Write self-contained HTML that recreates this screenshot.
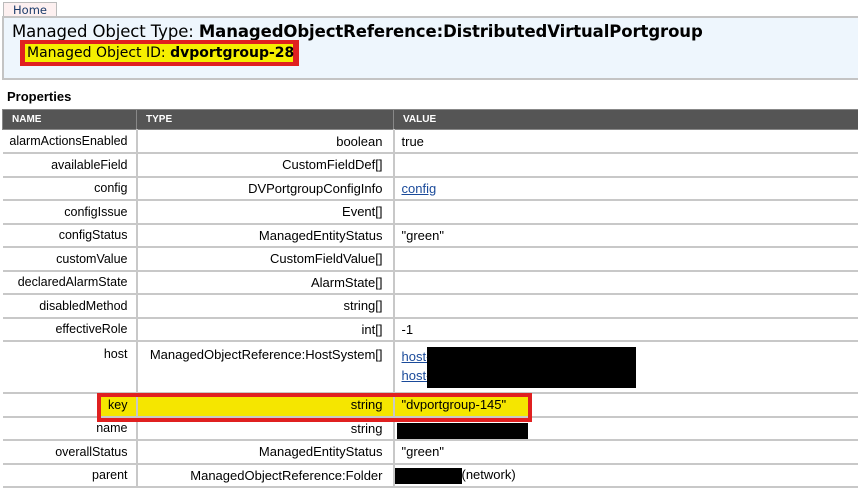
<!DOCTYPE html>
<html><head><meta charset="utf-8"><style>
*{margin:0;padding:0;box-sizing:border-box}
body{width:858px;height:488px;overflow:hidden;background:#fff;position:relative;font-family:"Liberation Sans",sans-serif;font-size:13px;color:#000}
.a{position:absolute}
#tab{left:3px;top:2px;width:54px;height:15px;border:1px solid #bbb;border-bottom:none;background:#fdf0f0;color:#1a3a6a;font-family:"DejaVu Sans",sans-serif;font-size:11.5px;text-align:center;line-height:14px}
#hdr{left:2px;top:16px;width:870px;height:64px;background:#eef6fd;border:2px solid #c4c4c4;border-right:none}
#title{left:12px;top:22px;font-family:"DejaVu Sans",sans-serif;font-size:16.5px;white-space:nowrap;letter-spacing:-0.1px}
#redbox{left:20px;top:40px;width:279px;height:26px;background:#e02020}
#idtxt{left:25px;top:44px;width:268px;height:18px;background:#f5ef00;font-family:"DejaVu Sans",sans-serif;font-size:14px;line-height:18px;padding-left:2px;white-space:nowrap}
#props{left:7px;top:89px;font-weight:bold;font-size:13px}
table{position:absolute;left:2px;top:109px;border-collapse:collapse;width:880px;table-layout:fixed}
th{background:#555;color:#fff;font-size:10px;text-align:left;height:20px;padding-left:9px;border:1px solid #888;font-weight:bold}
td{height:23.5px;border:1px solid #c8c8c8;border-width:0 2px 2px 0;padding:0 10px;white-space:nowrap;overflow:hidden}
td.n{text-align:right;padding-right:8px;padding-left:0;font-size:12.5px}
td.t{text-align:right}
td.v{text-align:left;padding-left:7px}
a{color:#1a4a9a;text-decoration:underline}
.blk{background:#000}
</style></head><body>
<div id="tab" class="a">Home</div>
<div id="hdr" class="a"></div>
<div id="title" class="a">Managed Object Type: <b>ManagedObjectReference:DistributedVirtualPortgroup</b></div>
<div id="redbox" class="a"></div>
<div id="idtxt" class="a">Managed Object ID: <b>dvportgroup-28</b></div>
<div id="props" class="a">Properties</div>
<div class="a" style="left:101px;top:397px;width:427px;height:21px;background:#f5e600"></div>
<table>
<colgroup><col style="width:134px"><col style="width:257px"><col></colgroup>
<tr><th>NAME</th><th>TYPE</th><th>VALUE</th></tr>
<tr><td class="n">alarmActionsEnabled</td><td class="t">boolean</td><td class="v">true</td></tr>
<tr><td class="n">availableField</td><td class="t">CustomFieldDef[]</td><td class="v"></td></tr>
<tr><td class="n">config</td><td class="t">DVPortgroupConfigInfo</td><td class="v"><a>config</a></td></tr>
<tr><td class="n">configIssue</td><td class="t">Event[]</td><td class="v"></td></tr>
<tr><td class="n">configStatus</td><td class="t">ManagedEntityStatus</td><td class="v">"green"</td></tr>
<tr><td class="n">customValue</td><td class="t">CustomFieldValue[]</td><td class="v"></td></tr>
<tr><td class="n">declaredAlarmState</td><td class="t">AlarmState[]</td><td class="v"></td></tr>
<tr><td class="n">disabledMethod</td><td class="t">string[]</td><td class="v"></td></tr>
<tr><td class="n">effectiveRole</td><td class="t">int[]</td><td class="v">-1</td></tr>
<tr><td class="n" style="height:52px;vertical-align:top;padding-top:5px">host</td><td class="t" style="vertical-align:top;padding-top:5px">ManagedObjectReference:HostSystem[]</td><td class="v" style="vertical-align:top;padding-top:5px;line-height:19px"><a>host-</a><br><a>host-</a></td></tr>
<tr><td class="n">key</td><td class="t">string</td><td class="v">"dvportgroup-145"</td></tr>
<tr><td class="n">name</td><td class="t">string</td><td class="v"></td></tr>
<tr><td class="n">overallStatus</td><td class="t">ManagedEntityStatus</td><td class="v">"green"</td></tr>
<tr><td class="n">parent</td><td class="t">ManagedObjectReference:Folder</td><td class="v" style="padding-left:0"><span style="display:inline-block;width:67px;height:16px;background:#000;vertical-align:middle"></span>(network)</td></tr>
</table>
<div class="a" style="left:97px;top:393px;width:435px;height:29px;border:4px solid #e02020"></div>
<div class="a blk" style="left:427px;top:347px;width:209px;height:21px"></div>
<div class="a blk" style="left:427px;top:368px;width:209px;height:20px"></div>
<div class="a blk" style="left:397px;top:423px;width:131px;height:16px"></div>
</body></html>
